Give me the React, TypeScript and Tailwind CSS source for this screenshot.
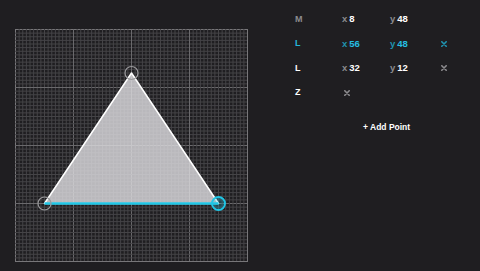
import React from "react";

type Cmd = { c: string; x?: number; y?: number; active?: boolean; removable?: boolean };

const points: Cmd[] = [
  { c: "M", x: 8, y: 48 },
  { c: "L", x: 56, y: 48, active: true, removable: true },
  { c: "L", x: 32, y: 12, removable: true },
  { c: "Z", removable: true },
];

const S = 232 / 64;
const px = (v: number) => 0.5 + v * S;

const Grid: React.FC = () => {
  const lines = [];
  for (let i = 0; i <= 64; i++) {
    const major = i % 16 === 0;
    const edge = i === 0 || i === 64;
    const color = edge ? "#777679" : major ? "#6a696c" : "#454447";
    lines.push(
      <line key={"v" + i} x1={px(i)} y1={0} x2={px(i)} y2={233} stroke={color} strokeWidth={1} />,
      <line key={"h" + i} x1={0} y1={px(i)} x2={233} y2={px(i)} stroke={color} strokeWidth={1} />
    );
  }
  return <g>{lines}</g>;
};

const Canvas: React.FC = () => {
  const [a, b, c] = [points[0], points[1], points[2]];
  return (
    <svg width={233} height={233} viewBox="0 0 233 233">
      <Grid />
      <polygon
        points={`${px(a.x!)},${px(a.y!)} ${px(b.x!)},${px(b.y!)} ${px(c.x!)},${px(c.y!)}`}
        fill="#dcdbde"
        fillOpacity={0.82}
        stroke="#ffffff"
        strokeWidth={1.5}
        strokeLinejoin="round"
      />
      <line x1={px(a.x!)} y1={px(a.y!)} x2={px(b.x!)} y2={px(b.y!)} stroke="#1fc6e6" strokeWidth={2.5} />
      <circle cx={px(a.x!)} cy={px(a.y!)} r={6.5} fill="none" stroke="#9a999c" strokeWidth={1.2} />
      <circle cx={px(c.x!)} cy={px(c.y!)} r={6.5} fill="none" stroke="#9a999c" strokeWidth={1.2} />
      <circle cx={px(b.x!)} cy={px(b.y!)} r={6.5} fill="#1fc6e6" fillOpacity={0.25} stroke="#1fc6e6" strokeWidth={2} />
    </svg>
  );
};

const Cross: React.FC<{ color: string }> = ({ color }) => (
  <svg width={6} height={6} viewBox="0 0 6 6">
    <path d="M0.8 0.8L5.2 5.2M5.2 0.8L0.8 5.2" stroke={color} strokeWidth={1.6} strokeLinecap="round" />
  </svg>
);

const App: React.FC = () => {
  return (
    <div
      className="w-[480px] h-[271px] bg-[#1f1e21] flex overflow-hidden"
      style={{ fontFamily: '"Liberation Sans", Arial, sans-serif' }}
    >
      <div className="pl-[15px] pt-[29px]">
        <Canvas />
      </div>

      <div className="ml-[47px] pt-[7px] w-[180px] text-[9px] font-bold">
        {points.map((p, i) => {
          const letter = p.active ? "text-[#25b8da]" : i === 0 ? "text-[#8c8b8e]" : "text-white";
          const label = p.active ? "text-[#1f93b0]" : "text-[#8c8b8e]";
          const value = p.active ? "text-[#25bfe2] text-[9.5px]" : "text-white text-[9.5px]";
          const cross = p.active ? "#1f93b0" : "#8c8b8e";
          return (
            <div key={i} className="grid grid-cols-[47px_48px_50px_20px] h-[24.5px] items-center">
              <span className={letter}>{p.c}</span>
              {p.x !== undefined ? (
                <>
                  <span className={value}>
                    <span className={`${label} mr-[2px]`}>x</span>
                    {p.x}
                  </span>
                  <span className={value}>
                    <span className={`${label} mr-[2px]`}>y</span>
                    {p.y}
                  </span>
                  <span className="pl-[1px] flex">
                    {p.removable && <Cross color={cross} />}
                  </span>
                </>
              ) : (
                <span className="pl-[2px] flex">
                  <Cross color={cross} />
                </span>
              )}
            </div>
          );
        })}
        <div className="mt-[16px] pl-[68px] text-white text-[8.5px]">+ Add Point</div>
      </div>
    </div>
  );
};

export default App;
